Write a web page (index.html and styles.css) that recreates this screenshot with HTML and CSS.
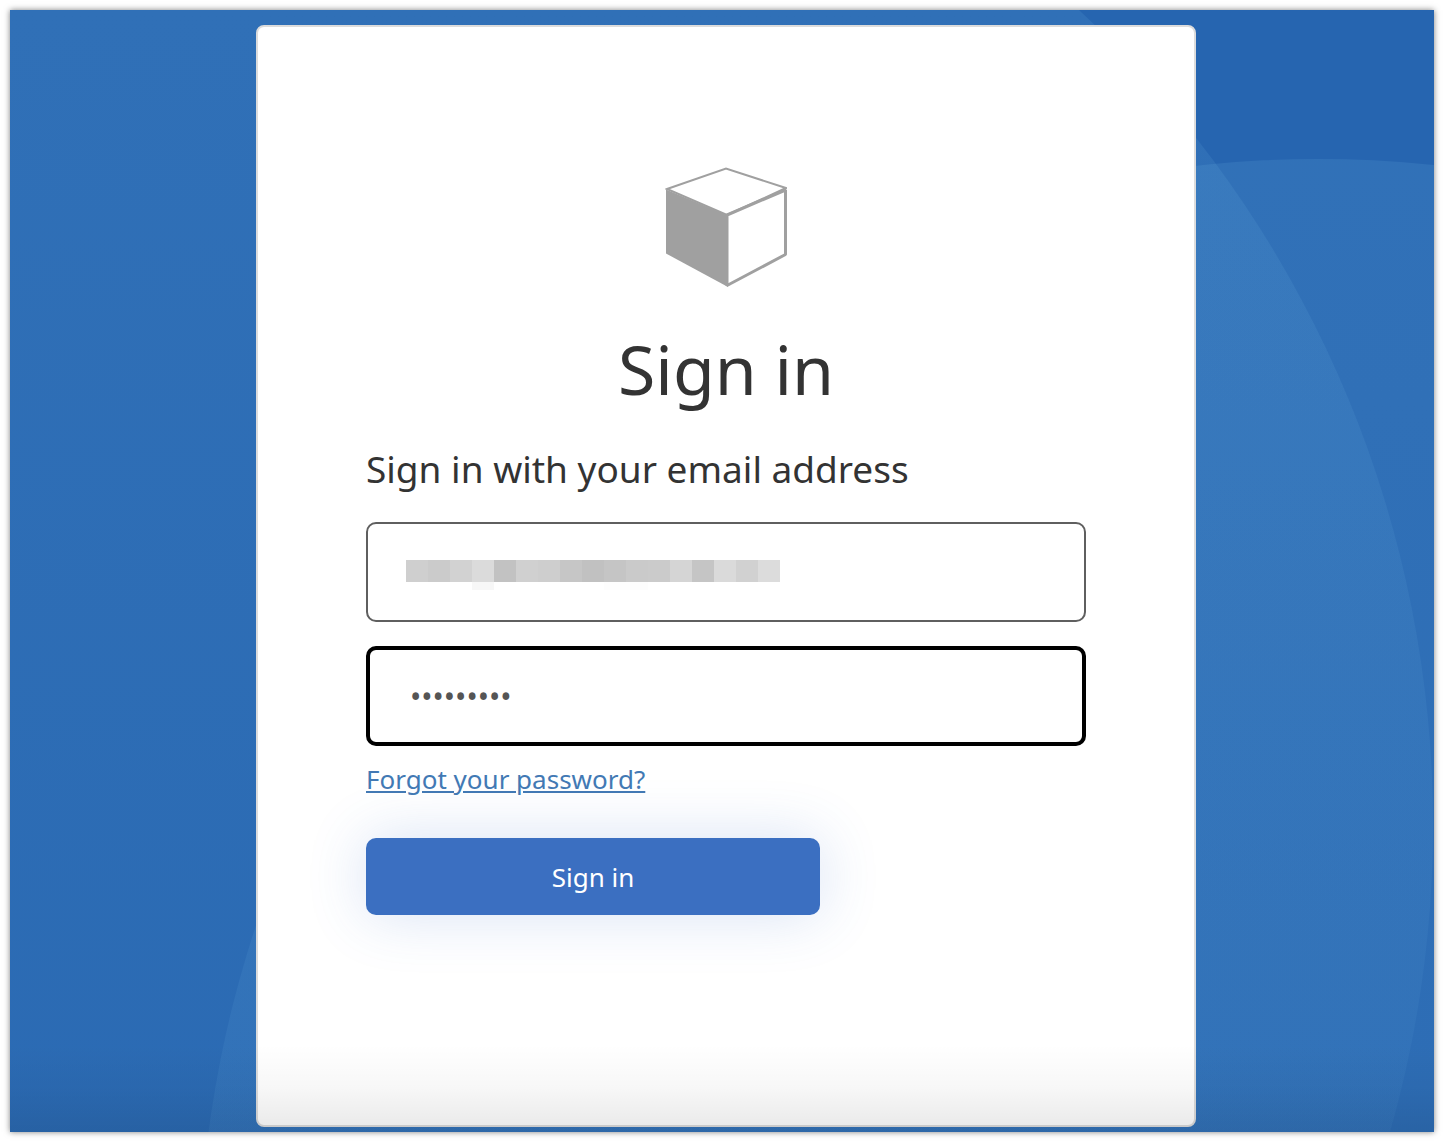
FILE: index.html
```html
<!DOCTYPE html>
<html lang="en">
<head>
    <meta charset="UTF-8">
    <meta name="viewport" content="width=device-width, initial-scale=1.0">
    <title>Sign in</title>
    <link rel="stylesheet" href="styles.css">
</head>
<body>
    <div class="page">
        <svg class="backdrop" viewBox="0 0 1424 1122" preserveAspectRatio="xMidYMid slice" aria-hidden="true">
            <defs>
                <linearGradient id="fade-left" gradientUnits="userSpaceOnUse" x1="0" y1="0" x2="0" y2="1122">
                    <stop offset="0" stop-color="#8ad3f6" stop-opacity="0.1"/>
                    <stop offset="1" stop-color="#8ad3f6" stop-opacity="0.05"/>
                </linearGradient>
                <linearGradient id="fade-right" gradientUnits="userSpaceOnUse" x1="0" y1="148" x2="0" y2="1122">
                    <stop offset="0" stop-color="#8ad3f6" stop-opacity="0.11"/>
                    <stop offset="1" stop-color="#8ad3f6" stop-opacity="0.07"/>
                </linearGradient>
            </defs>
            <circle cx="308" cy="815" r="1115" fill="url(#fade-left)"/>
            <circle cx="1308" cy="1268" r="1119" fill="url(#fade-right)"/>
        </svg>
        <main class="card">
            <svg class="logo" viewBox="-1 0 122 122" aria-hidden="true">
                <path d="M1 22 L60 1.5 L120 21 L61 48 Z" fill="#fff" stroke="#a0a0a0" stroke-width="2"/>
                <path d="M0 22.5 L62 48.5 V120 L0 86.5 Z" fill="#a0a0a0"/>
                <path d="M61 48 L119.5 23 V87.5 L61 118.5 Z" fill="#fff" stroke="#a0a0a0" stroke-width="3" stroke-linejoin="bevel"/>
            </svg>
            <h1>Sign in</h1>
            <form>
                <h2>Sign in with your email address</h2>
                <div class="field">
                    <input class="text-input" type="email" aria-label="Email address">
                    <svg class="masked" viewBox="0 0 374 30" aria-hidden="true">
                        <rect x="0" width="22" height="22" fill="#cfcfcf"/>
                        <rect x="22" width="22" height="22" fill="#cbcbcb"/>
                        <rect x="44" width="22" height="22" fill="#d2d2d2"/>
                        <rect x="66" width="22" height="22" fill="#dbdbdb"/>
                        <rect x="88" width="22" height="22" fill="#c2c2c2"/>
                        <rect x="110" width="22" height="22" fill="#d0d0d0"/>
                        <rect x="132" width="22" height="22" fill="#cecece"/>
                        <rect x="154" width="22" height="22" fill="#c6c6c6"/>
                        <rect x="176" width="22" height="22" fill="#c1c1c1"/>
                        <rect x="198" width="22" height="22" fill="#c5c5c5"/>
                        <rect x="220" width="22" height="22" fill="#cacaca"/>
                        <rect x="242" width="22" height="22" fill="#cbcbcb"/>
                        <rect x="264" width="22" height="22" fill="#d5d5d5"/>
                        <rect x="286" width="22" height="22" fill="#c5c5c5"/>
                        <rect x="308" width="22" height="22" fill="#dadada"/>
                        <rect x="330" width="22" height="22" fill="#d1d1d1"/>
                        <rect x="352" width="22" height="22" fill="#dcdcdc"/>
                        <rect x="66" y="22" width="22" height="8" fill="#f7f7f7"/>
                        <rect x="198" y="22" width="44" height="8" fill="#fdfdfd"/>
                    </svg>
                </div>
                <div class="field">
                    <input class="text-input active" type="password" value="password1" aria-label="Password">
                </div>
                <a class="forgot" href="#">Forgot your password?</a>
                <button class="submit" type="submit">Sign in</button>
            </form>
        </main>
    </div>
</body>
</html>
```
FILE: styles.css
```css
* {
    box-sizing: border-box;
}

body {
    font-family: "Noto Sans", "Open Sans", sans-serif;
    color: #333;
    background: #fff;
    margin: 0;
    padding: 10px;
}

.page {
    position: relative;
    display: flex;
    justify-content: center;
    min-height: calc(100vh - 20px);
    padding: 15px 0 5px 8px;
    background: #2665b0;
    box-shadow: 0 0 6px rgba(0, 0, 0, 0.5);
}

/* soft shade along the bottom edge */
.page::after {
    content: "";
    position: absolute;
    left: 0;
    right: 0;
    bottom: 0;
    height: 88px;
    background: linear-gradient(rgba(0, 0, 0, 0), rgba(0, 0, 0, 0.03) 50%, rgba(0, 0, 0, 0.09));
    pointer-events: none;
}

.backdrop {
    position: absolute;
    top: 0;
    left: 0;
    width: 100%;
    height: 100%;
}

.card {
    position: relative;
    width: 100%;
    max-width: 940px;
    padding: 140px 108px 40px;
    background: #fff;
    border: 2px solid #dcdcdc;
    border-radius: 8px;
}

.logo {
    display: block;
    width: 122px;
    height: 122px;
    margin: 0 auto;
}

h1 {
    margin: 32px 0 0;
    font-size: 68px;
    font-weight: 400;
    line-height: 96px;
    text-align: center;
}

h2 {
    margin: 26px 0 27px;
    font-size: 37px;
    font-weight: 400;
    line-height: 52px;
}

.field {
    position: relative;
    margin-bottom: 24px;
}

.text-input {
    display: block;
    width: 100%;
    height: 100px;
    padding: 0 42px;
    font-family: inherit;
    font-size: 30px;
    color: #555;
    background: #fff;
    border: 2px solid #5f5f5f;
    border-radius: 10px;
    outline: none;
}

.text-input.active,
.text-input:focus {
    padding: 0 40px;
    border: 4px solid #000;
}

.masked {
    position: absolute;
    top: 38px;
    left: 40px;
    width: 374px;
    height: 30px;
    pointer-events: none;
}

.forgot {
    display: block;
    width: fit-content;
    margin: -9px 0 41px;
    font-size: 26px;
    line-height: 36px;
    color: #4279b4;
}

.submit {
    display: block;
    width: 100%;
    max-width: 454px;
    height: 77px;
    padding: 0;
    font-family: inherit;
    font-size: 26px;
    color: #fff;
    background: #3b6fc1;
    border: none;
    border-radius: 10px;
    box-shadow: 0 0 60px rgba(59, 111, 200, 0.2);
    cursor: pointer;
}
```
